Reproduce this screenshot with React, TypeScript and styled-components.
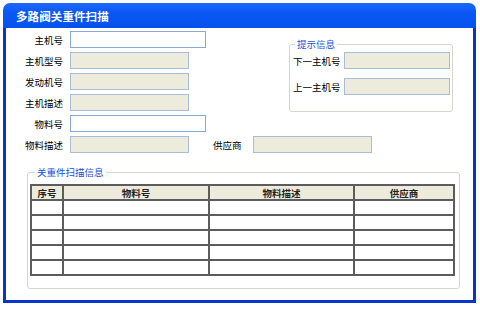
import styled, { createGlobalStyle } from 'styled-components'

const GlobalStyle = createGlobalStyle`
  body {
    margin: 0;
    background: #fff;
    font-family: "Noto Sans CJK SC", "Liberation Sans", sans-serif;
  }
`

const rows = [1, 2, 3, 4, 5]

const App = () => {
  return (
    <>
      <GlobalStyle />
      <Window>
        <TitleBar>多路阀关重件扫描</TitleBar>
        <Frame>
          <TopArea>
            <Form>
              <Row>
                <Label>主机号</Label>
                <Input />
              </Row>
              <Row>
                <Label>主机型号</Label>
                <Input disabled />
              </Row>
              <Row>
                <Label>发动机号</Label>
                <Input disabled />
              </Row>
              <Row>
                <Label>主机描述</Label>
                <Input disabled />
              </Row>
              <Row>
                <Label>物料号</Label>
                <Input />
              </Row>
            </Form>
            <HintBox>
              <Legend>提示信息</Legend>
              <HintRow>
                <HintLabel>下一主机号</HintLabel>
                <Input disabled $width={106} />
              </HintRow>
              <HintRow>
                <HintLabel>上一主机号</HintLabel>
                <Input disabled $width={106} />
              </HintRow>
            </HintBox>
          </TopArea>
          <BottomRow>
            <Label>物料描述</Label>
            <Input disabled />
            <SupplierLabel>供应商</SupplierLabel>
            <Input disabled />
          </BottomRow>
          <ScanBox>
            <ScanLegend>关重件扫描信息</ScanLegend>
            <Table>
              <colgroup>
                <col style={{ width: 32 }} />
                <col style={{ width: 146 }} />
                <col style={{ width: 145 }} />
                <col style={{ width: 100 }} />
              </colgroup>
              <thead>
                <tr>
                  <Th>序号</Th>
                  <Th>物料号</Th>
                  <Th>物料描述</Th>
                  <Th>供应商</Th>
                </tr>
              </thead>
              <tbody>
                {rows.map((r) => (
                  <tr key={r}>
                    <Td />
                    <Td />
                    <Td />
                    <Td />
                  </tr>
                ))}
              </tbody>
            </Table>
          </ScanBox>
        </Frame>
      </Window>
    </>
  )
}

export default App

const Window = styled.div`
  width: 473px;
  margin: 3px 0 0 3px;
`

const TitleBar = styled.div`
  height: 25px;
  box-sizing: border-box;
  padding-left: 13px;
  display: flex;
  align-items: center;
  border-radius: 7px 7px 0 0;
  background: linear-gradient(#1c66ff, #0a58f4 40%, #0652ec);
  color: #fff;
  font-size: 11.5px;
  font-weight: bold;
  letter-spacing: 0.1px;
`

const Frame = styled.div`
  height: 275px;
  box-sizing: border-box;
  border: 3px solid #0836cc;
  border-top: none;
  background: #fff;
  display: flex;
  flex-direction: column;
  padding-top: 3px;
`

const TopArea = styled.div`
  display: flex;
  align-items: flex-start;
`

const Form = styled.div`
  display: flex;
  flex-direction: column;
  gap: 4px;
`

const Row = styled.div`
  display: flex;
  align-items: center;
  height: 17px;
`

const Label = styled.span`
  width: 57px;
  margin-right: 7px;
  text-align: right;
  font-size: 9.5px;
  color: #000;
  white-space: nowrap;
`

const Input = styled.div<{ disabled?: boolean; $width?: number }>`
  width: ${(p) => (p.$width ? p.$width : p.disabled ? 119 : 136)}px;
  height: 17px;
  box-sizing: border-box;
  border: 1px solid ${(p) => (p.disabled ? '#a9bcd8' : '#88a8dc')};
  background: ${(p) => (p.disabled ? '#ecebdc' : '#fff')};
`

const HintBox = styled.fieldset`
  margin: 7px 0 0 83px;
  padding: 2px 2px 0 3px;
  width: 164px;
  height: 74px;
  box-sizing: border-box;
  border: 1px solid #d6d6cc;
  border-radius: 3px;
  display: flex;
  flex-direction: column;
  gap: 9px;
`

const Legend = styled.legend`
  margin-left: 2px;
  padding: 0 2px;
  font-size: 9.5px;
  line-height: 12px;
  color: #1450d8;
`

const HintRow = styled.div`
  display: flex;
  align-items: center;
`

const HintLabel = styled.span`
  width: 47px;
  margin-right: 4px;
  text-align: right;
  font-size: 9.5px;
  color: #000;
  white-space: nowrap;
`

const BottomRow = styled(Row)`
  margin-top: 4px;
`

const SupplierLabel = styled.span`
  width: 30px;
  margin: 0 10px 0 24px;
  font-size: 9.5px;
  color: #000;
  white-space: nowrap;
`

const ScanBox = styled.fieldset`
  margin: 13px 0 0 21px;
  padding: 6px 0 0 2px;
  width: 433px;
  height: 123px;
  box-sizing: border-box;
  border: 1px solid #d6d6cc;
  border-radius: 3px;
`

const ScanLegend = styled(Legend)`
  margin-left: 5px;
`

const Table = styled.table`
  width: 423px;
  border-collapse: collapse;
  table-layout: fixed;
  border: 2px solid #5c5c5c;
`

const Th = styled.th`
  height: 13px;
  padding: 0;
  border: 2px solid #5c5c5c;
  background: #ecebdc;
  font-size: 9.5px;
  line-height: 12px;
  font-weight: bold;
  color: #222;
`

const Td = styled.td`
  height: 13px;
  padding: 0;
  border: 2px solid #5c5c5c;
`
